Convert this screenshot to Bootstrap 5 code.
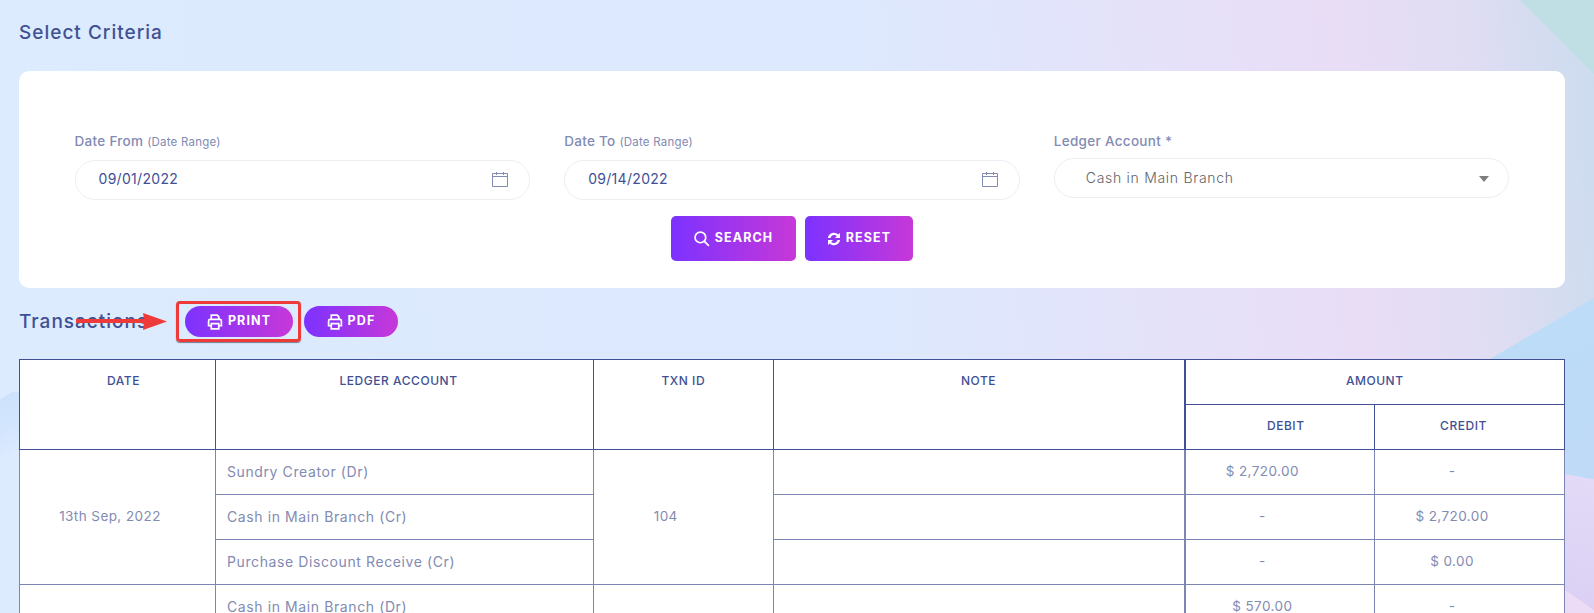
<!DOCTYPE html>
<html lang="en">
<head>
<meta charset="utf-8">
<title>Select Criteria</title>
<link href="https://cdn.jsdelivr.net/npm/bootstrap@5.3.0/dist/css/bootstrap.min.css" rel="stylesheet">
<style>
html,body{height:613px;overflow:hidden}
body{font-family:"Inter","Noto Sans",sans-serif;color:#828bb2;margin:0;position:relative;
background:
 linear-gradient(225deg,#c0dfe5 0,#c0dfe5 52px,transparent 52.5px) no-repeat right top/200px 200px,
 linear-gradient(214.6deg,transparent 22px,#ecdcf5 22.5px) no-repeat right bottom/29px 30px,
 linear-gradient(191deg,transparent 13px,#e2daf7 13.5px,#dbd0f4 100%) no-repeat right 0 top 466px/29px 147px,
 linear-gradient(149.5deg,transparent 108px,#bcdcf7 108.5px,#bfdaf6 100%) no-repeat right 0 top 290px/200px 190px,
 linear-gradient(150deg,transparent 6px,#cde2fd 6.5px,#d6e7fe 45px,transparent 60px) no-repeat left 0 top 392px/19px 70px,
 linear-gradient(85deg,#dcebfe 0%,#dde9fe 55%,#e9ddf6 84%,#e0ddf3 92%,#cbdcee 100%);}
.sheet{padding:0 29px 0 19px}
.sect-title{font-size:19px;font-weight:500;letter-spacing:1px;color:#415094;margin:0;line-height:24px}
.top-title{padding-top:21px;height:71px}
.crit-card{background:#fff;border-radius:10px;height:217px;padding:60px 38.5px 0}
.crit-cell{padding:0 17px}
.crit-label{font-size:13.5px;font-weight:500;letter-spacing:.3px;line-height:20px;margin:0 0 8px;display:block;color:#828bb2}
.crit-label small{font-size:11.5px;font-weight:400;letter-spacing:.2px}
.pill-field{height:40px;border:1px solid #eceef4;border-radius:20px;display:flex;align-items:center;justify-content:space-between;padding:0 21px 3px 23px;font-size:14px;letter-spacing:.3px;color:#415094;background:#fff}
.sel-field{margin-top:-1px;padding-left:31px;color:#5f6368;padding-right:19px;padding-bottom:2px;font-weight:300;letter-spacing:.7px}
.caret-tri{width:0;height:0;border-left:5px solid transparent;border-right:5px solid transparent;border-top:6px solid #7d7d7d;margin-top:4px}
.grad-btn{background:linear-gradient(90deg,#7c32ff,#c738d8);color:#fff;border:0;font-weight:700;letter-spacing:1.1px;font-size:12.5px;display:inline-flex;align-items:center;justify-content:center;gap:5px;padding:0}
.grad-btn:hover{color:#fff}
.btn-search{width:125px;height:45px;border-radius:5px}
.btn-reset{width:108px;height:45px;border-radius:5px}
.btn-gap{gap:9px;margin-top:16px}
.trans-head{height:71px;position:relative;padding-top:18px}
.trans-title{width:166px;padding-top:4px}
.trans-btns{gap:11px}
.btn-print{width:108px;height:31px;border-radius:16px}
.btn-pdf{width:94px;height:31px;border-radius:16px}
.red-box{position:absolute;left:157px;top:13px;width:125px;height:41px;border:3px solid #ef3a3a;border-radius:4px;box-shadow:0 1px 1px #6f7f90;pointer-events:none}
.red-arrow{position:absolute;left:57px;top:25px}
.ledger{width:1545px;table-layout:fixed;border-collapse:collapse;background:#fff;font-size:13.5px;letter-spacing:.42px;margin:0}
.ledger th{border:1px solid #415094;color:#415094;font-weight:450;font-size:12px;letter-spacing:.55px;text-align:center;vertical-align:top;padding:11px 8px 13px;height:45px;line-height:20px}
.ledger th.nudge-r{padding-left:20px}
.ledger th.nudge-l{padding-right:20px}
.ledger td{border:1px solid #7c85b3;color:#828bb2;height:45px;padding:0 11px 2px;text-align:center;vertical-align:middle}
.ledger td.txt-left{text-align:left;font-size:14px;letter-spacing:.6px}
.ledger td.date-cell{padding-right:26px}
.ledger td.amt-cell{padding-right:46px}
.ledger .thick{border-left:2px solid #415094}
.ledger td.thick{border-left-color:#7c85b3}
</style>
</head>
<body>
<div class="sheet">
  <div class="top-title"><h3 class="sect-title">Select Criteria</h3></div>
  <div class="crit-card">
    <div class="row g-0">
      <div class="col-4 crit-cell">
        <label class="crit-label">Date From <small>(Date Range)</small></label>
        <div class="pill-field"><span>09/01/2022</span>
          <svg width="16" height="16" viewBox="0 0 16 16" fill="none" stroke="#828bb2" stroke-width="1"><path d="M.5 2.5h15v13H.5zM.5 5.500h15M4.500 1v3M11.500 1v3"/></svg></div>
      </div>
      <div class="col-4 crit-cell">
        <label class="crit-label">Date To <small>(Date Range)</small></label>
        <div class="pill-field"><span>09/14/2022</span>
          <svg width="16" height="16" viewBox="0 0 16 16" fill="none" stroke="#828bb2" stroke-width="1"><path d="M.5 2.5h15v13H.5zM.5 5.500h15M4.500 1v3M11.500 1v3"/></svg></div>
      </div>
      <div class="col-4 crit-cell">
        <label class="crit-label">Ledger Account *</label>
        <div class="pill-field sel-field"><span>Cash in Main Branch</span><i class="caret-tri"></i></div>
      </div>
    </div>
    <div class="d-flex justify-content-center btn-gap">
      <button class="btn grad-btn btn-search"><svg width="16" height="16" viewBox="0 0 15 15" fill="none" stroke="#fff" stroke-width="1.6"><circle cx="6" cy="6" r="5"/><path d="M9.7 9.7 14 14"/></svg>SEARCH</button>
      <button class="btn grad-btn btn-reset"><svg width="14" height="14" viewBox="0 0 14 14" fill="#fff"><path d="M1 6C1.3 3 4 .8 7 .8c1.7 0 3.1.7 4.2 1.8L13 1v5H8l1.9-1.9C9.2 3.4 8.2 3 7 3 5.4 3 4 4.2 3.5 6zM13 8c-.3 3-3 5.2-6 5.2-1.7 0-3.1-.7-4.2-1.8L1 13V8h5l-1.900 1.900c.7.7 1.700 1.100 2.900 1.100 1.600 0 3-1.200 3.500-3z"/></svg>RESET</button>
    </div>
  </div>
  <div class="trans-head d-flex align-items-start">
    <h3 class="sect-title trans-title">Transactions</h3>
    <div class="d-flex trans-btns">
      <button class="btn grad-btn btn-print"><svg width="16" height="16" viewBox="0 0 15 15" fill="none" stroke="#fff" stroke-width="1.6"><path d="M4 5V1h5.500L11 2.500V5M4 11H1.500V6.500Q1.500 5 3 5h9q1.500 0 1.500 1.500V11H11M4 9h7v5H4z"/></svg>PRINT</button>
      <button class="btn grad-btn btn-pdf"><svg width="16" height="16" viewBox="0 0 15 15" fill="none" stroke="#fff" stroke-width="1.6"><path d="M4 5V1h5.500L11 2.500V5M4 11H1.500V6.500Q1.500 5 3 5h9q1.500 0 1.500 1.500V11H11M4 9h7v5H4z"/></svg>PDF</button>
    </div>
    <div class="red-box"></div>
    <svg class="red-arrow" width="91" height="17" viewBox="0 0 91 17"><path d="M0 6h68l-1-6 24 8.500-24 8.500 1-7H0z" fill="#ef3a3a"/></svg>
  </div>
  <table class="ledger">
    <colgroup><col style="width:196px"><col style="width:378px"><col style="width:179.5px"><col style="width:411.5px"><col style="width:190px"><col style="width:190px"></colgroup>
    <thead>
      <tr><th rowspan="2" class="nudge-r">DATE</th><th rowspan="2" class="nudge-l">LEDGER ACCOUNT</th><th rowspan="2">TXN ID</th><th rowspan="2">NOTE</th><th colspan="2" class="thick">AMOUNT</th></tr>
      <tr><th class="thick nudge-r">DEBIT</th><th class="nudge-l">CREDIT</th></tr>
    </thead>
    <tbody>
      <tr><td rowspan="3" class="date-cell">13th Sep, 2022</td><td class="txt-left">Sundry Creator (Dr)</td><td rowspan="3" class="amt-cell">104</td><td></td><td class="thick amt-cell">$ 2,720.00</td><td class="amt-cell">-</td></tr>
      <tr><td class="txt-left">Cash in Main Branch (Cr)</td><td></td><td class="thick amt-cell">-</td><td class="amt-cell">$ 2,720.00</td></tr>
      <tr><td class="txt-left">Purchase Discount Receive (Cr)</td><td></td><td class="thick amt-cell">-</td><td class="amt-cell">$ 0.00</td></tr>
      <tr><td></td><td class="txt-left">Cash in Main Branch (Dr)</td><td></td><td></td><td class="thick amt-cell">$ 570.00</td><td class="amt-cell">-</td></tr>
    </tbody>
  </table>
</div>
<script src="https://cdn.jsdelivr.net/npm/bootstrap@5.3.0/dist/js/bootstrap.bundle.min.js"></script>
</body>
</html>
